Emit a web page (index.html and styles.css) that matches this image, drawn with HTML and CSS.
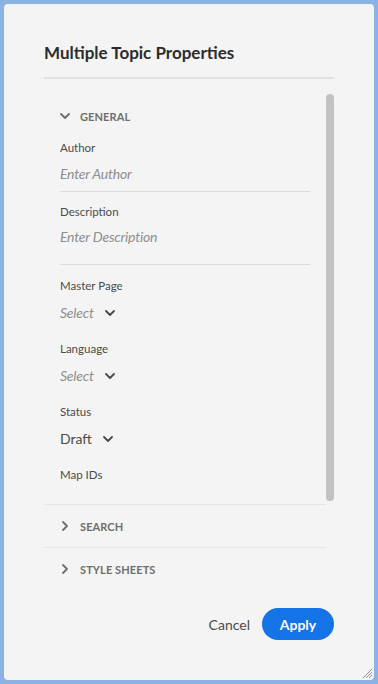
FILE: index.html
```html
<!DOCTYPE html>
<html lang="en">
<head>
    <meta charset="UTF-8">
    <meta name="viewport" content="width=device-width, initial-scale=1.0">
    <title>Multiple Topic Properties</title>
    <link rel="stylesheet" href="styles.css">
</head>
<body>
<div class="dialog">
    <h2 class="title">Multiple Topic Properties</h2>

    <div class="scroll">
        <div class="general">
            <div class="section-head">
                <svg class="chev" width="10" height="6" viewBox="0 0 10 6"><path d="M1 1l4 4 4-4" fill="none" stroke="#6e6e6e" stroke-width="1.8" stroke-linecap="round" stroke-linejoin="round"/></svg>
                <span>GENERAL</span>
            </div>
            <div class="fields">
                <div class="field text">
                    <label>Author</label>
                    <div class="placeholder">Enter Author</div>
                </div>
                <div class="field text area">
                    <label>Description</label>
                    <div class="placeholder">Enter Description</div>
                </div>
                <div class="field drop">
                    <label>Master Page</label>
                    <div class="picker placeholder">Select
                        <svg width="10" height="6" viewBox="0 0 10 6"><path d="M1 1l4 4 4-4" fill="none" stroke="#4b4b4b" stroke-width="1.8" stroke-linecap="round" stroke-linejoin="round"/></svg>
                    </div>
                </div>
                <div class="field drop">
                    <label>Language</label>
                    <div class="picker placeholder">Select
                        <svg width="10" height="6" viewBox="0 0 10 6"><path d="M1 1l4 4 4-4" fill="none" stroke="#4b4b4b" stroke-width="1.8" stroke-linecap="round" stroke-linejoin="round"/></svg>
                    </div>
                </div>
                <div class="field drop">
                    <label>Status</label>
                    <div class="picker value">Draft
                        <svg width="10" height="6" viewBox="0 0 10 6"><path d="M1 1l4 4 4-4" fill="none" stroke="#4b4b4b" stroke-width="1.8" stroke-linecap="round" stroke-linejoin="round"/></svg>
                    </div>
                </div>
                <div class="field last">
                    <label>Map IDs</label>
                </div>
            </div>
        </div>
        <div class="scrollbar"></div>
    </div>

    <div class="section">
        <div class="section-head">
            <svg class="chev" width="10" height="10" viewBox="0 0 10 10"><path d="M3 1l4 4-4 4" fill="none" stroke="#6e6e6e" stroke-width="1.8" stroke-linecap="round" stroke-linejoin="round"/></svg>
            <span>SEARCH</span>
        </div>
    </div>
    <div class="section no-line">
        <div class="section-head">
            <svg class="chev" width="10" height="10" viewBox="0 0 10 10"><path d="M3 1l4 4-4 4" fill="none" stroke="#6e6e6e" stroke-width="1.8" stroke-linecap="round" stroke-linejoin="round"/></svg>
            <span>STYLE SHEETS</span>
        </div>
    </div>

    <div class="footer">
        <button class="cancel">Cancel</button>
        <button class="apply">Apply</button>
    </div>

    <svg class="grip" width="10" height="10" viewBox="0 0 10 10"><path d="M9 3L3 9M9 6L6 9M9 0L0 9" stroke="#7a7a7a" stroke-width="0.8"/></svg>
</div>
</body>
</html>
```

FILE: styles.css
```css
body {
    margin: 0;
    padding: 4px;
    background-color: #8ab2e2;
    font-family: Lato, "Open Sans", sans-serif;
}
.dialog {
    position: relative;
    height: 676px;
    box-sizing: border-box;
    background-color: #f4f4f4;
    border-radius: 4px;
    padding: 37px 40px 0 40px;
}
.title {
    margin: 0;
    font-size: 17px;
    line-height: 24px;
    font-weight: bold;
    color: #2c2c2c;
    padding-bottom: 12px;
    border-bottom: 2px solid #e1e1e1;
}
.scroll {
    display: flex;
    height: 426px;
}
.general {
    flex: 1;
    border-bottom: 1px solid #e6e6e6;
    padding-top: 29px;
}
.scrollbar {
    width: 8px;
    margin: 15px 0 4px 0;
    background-color: #c2c2c2;
    border-radius: 4px;
}
.section-head {
    display: flex;
    align-items: center;
    padding-left: 16px;
    height: 16px;
    font-size: 11px;
    font-weight: bold;
    color: #6e6e6e;
    letter-spacing: 0.1px;
}
.section-head .chev {
    margin-right: 10px;
}
.fields {
    padding: 16px 16px 0 16px;
}
.field label {
    display: block;
    font-size: 11.5px;
    line-height: 16px;
    color: #4b4b4b;
}
.placeholder, .value {
    font-size: 14px;
    line-height: 20px;
}
.placeholder {
    font-style: italic;
    color: #8e8e8e;
    letter-spacing: -0.2px;
}
.value {
    color: #4b4b4b;
}
.field.text .placeholder {
    margin-top: 8px;
    padding-bottom: 7px;
    border-bottom: 1px solid #dcdcdc;
}
.field.text {
    margin-bottom: 12px;
}
.field.area .placeholder {
    margin-top: 7px;
    padding-bottom: 17px;
}
.field.area {
    margin-bottom: 13px;
}
.field.drop {
    margin-bottom: 18px;
}
.picker {
    display: flex;
    align-items: center;
    gap: 11px;
    margin-top: 9px;
}
.section {
    border-bottom: 1px solid #e6e6e6;
    width: 282px;
    padding: 13px 0;
}
.section.no-line {
    border-bottom: none;
}
.footer {
    display: flex;
    justify-content: flex-end;
    align-items: center;
    gap: 12px;
    margin-top: 18px;
}
.footer button {
    font-family: Lato, "Open Sans", sans-serif;
    font-size: 14px;
    border: none;
    cursor: pointer;
}
.cancel {
    background: none;
    color: #4b4b4b;
    padding: 0;
}
.apply {
    background-color: #1473e6;
    color: #fff;
    font-size: 15px;
    font-weight: bold;
    height: 32px;
    width: 72px;
    border-radius: 16px;
}
.grip {
    position: absolute;
    right: 1px;
    bottom: 1px;
}
```
